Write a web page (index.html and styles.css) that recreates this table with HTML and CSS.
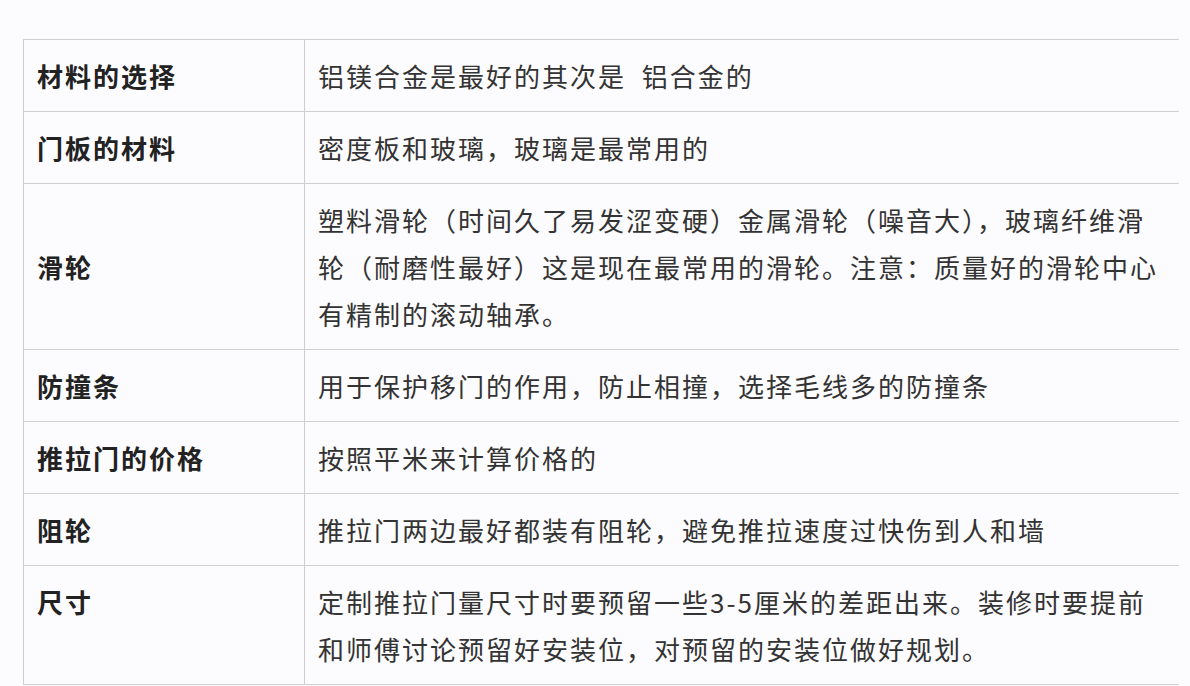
FILE: index.html
```html
<!DOCTYPE html>
<html lang="zh-CN">
<head>
<meta charset="utf-8">
<title>推拉门</title>
<link rel="stylesheet" href="styles.css">
</head>
<body>
<div class="page">
  <table class="spec">
    <tbody>
      <tr><th>材料的选择</th><td>铝镁合金是最好的其次是&nbsp;&nbsp;铝合金的</td></tr>
      <tr><th>门板的材料</th><td>密度板和玻璃，玻璃是最常用的</td></tr>
      <tr><th>滑轮</th><td>塑料滑轮（时间久了易发涩变硬）金属滑轮（噪音大），玻璃纤维滑轮（耐磨性最好）这是现在最常用的滑轮。注意：质量好的滑轮中心有精制的滚动轴承。</td></tr>
      <tr><th>防撞条</th><td>用于保护移门的作用，防止相撞，选择毛线多的防撞条</td></tr>
      <tr><th>推拉门的价格</th><td>按照平米来计算价格的</td></tr>
      <tr><th>阻轮</th><td>推拉门两边最好都装有阻轮，避免推拉速度过快伤到人和墙</td></tr>
      <tr><th class="top">尺寸</th><td>定制推拉门量尺寸时要预留一些3-5厘米的差距出来。装修时要提前和师傅讨论预留好安装位，对预留的安装位做好规划。</td></tr>
    </tbody>
  </table>
</div>
</body>
</html>
```
FILE: styles.css
```css
html, body {
  margin: 0;
  padding: 0;
  background: #fcfbfd;
}
.page {
  padding: 39px 0 0 23px;
}
.spec {
  border-collapse: collapse;
  width: 1156px;
  table-layout: fixed;
  border-top: 1px solid #cfcfd2;
  border-left: 1px solid #cfcfd2;
  font-family: "Microsoft YaHei", "Noto Sans CJK SC", "Noto Sans", sans-serif;
  font-size: 26px;
  line-height: 47px;
  color: #2a2a2a;
}
.spec th,
.spec td {
  padding: 12px 12px 12px 13px;
  border-bottom: 1px solid #cfcfd2;
  vertical-align: middle;
  text-align: left;
  letter-spacing: 2px;
}
.spec th {
  width: 255px;
  border-right: 1px solid #cfcfd2;
  font-weight: bold;
  color: #222;
}
.spec th.top {
  vertical-align: top;
}
.spec td {
  font-weight: normal;
  color: #333;
}
```
